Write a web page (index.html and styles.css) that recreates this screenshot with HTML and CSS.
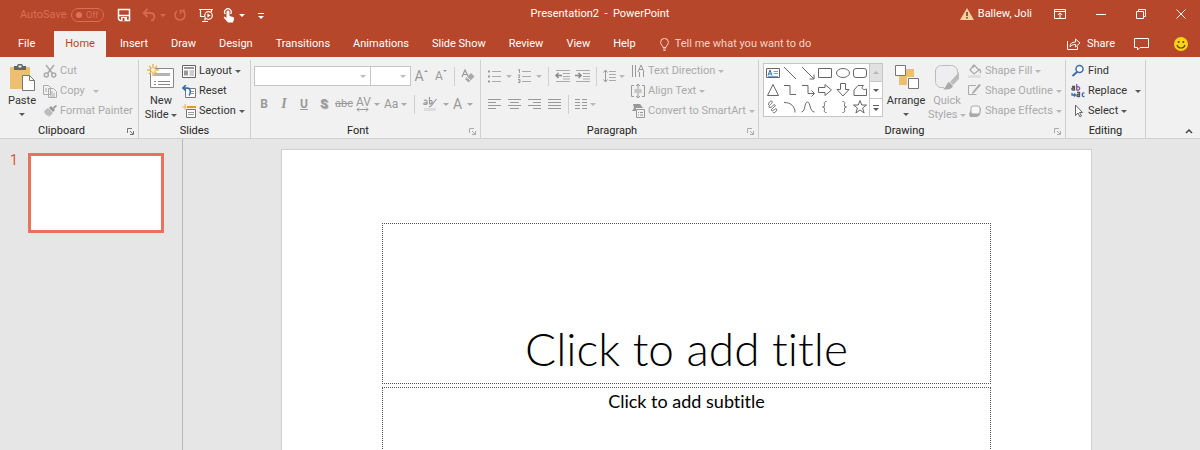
FILE: index.html
```
<!DOCTYPE html>
<html lang="en">
<head>
    <meta charset="UTF-8">
    <meta name="viewport" content="width=device-width, initial-scale=1.0">
    <title>Presentation2 - PowerPoint</title>
    <link rel="stylesheet" href="styles.css">
</head>
<body>
    <header class="titlebar">
        <div class="quick-access">
            <label class="autosave">AutoSave
                <input type="checkbox" class="autosave-input">
                <span class="switch"><i class="knob"></i>Off</span>
            </label>
            <button class="qa-button save" aria-label="Save">
                <svg width="14" height="14" viewBox="0 0 14 14"><path d="M1.500 1.500h11v11h-9.500l-1.500-1.500z" fill="none" stroke="#fff" stroke-width="1.500"/><path d="M2 7.500h10" fill="none" stroke="#fff" stroke-width="1.500"/><path d="M4 9h6v4H4z" fill="#fff"/><path d="M5.500 10h2v3h-2z" fill="#b7472a"/></svg>
            </button>
            <button class="qa-button undo faded" aria-label="Undo">
                <svg width="14" height="14" viewBox="0 0 14 14"><path d="M5.500 1L1.500 5l4 4M2 5h6.500c5 0 5 7 .5 7.500" fill="none" stroke="currentColor" stroke-width="1.800"/></svg>
                <i class="caret"></i>
            </button>
            <button class="qa-button redo faded" aria-label="Repeat">
                <svg width="14" height="14" viewBox="0 0 14 14"><path d="M4 3a5 5 0 1 0 6 0M7.500 6V2.500H12" fill="none" stroke="currentColor" stroke-width="1.600"/></svg>
            </button>
            <button class="qa-button show" aria-label="Start from beginning">
                <svg width="16" height="15" viewBox="0 0 16 15"><g fill="none" stroke="#fff" stroke-width="1.200"><path d="M1 1.500h14M2.500 2v6.500H6M13.500 2v2M7 10v2.500M4 13.500h6"/><circle cx="10.500" cy="7.500" r="3.800"/></g><path d="M9.400 5.500l3.200 2-3.200 2z" fill="#fff"/></svg>
            </button>
            <button class="qa-button touch" aria-label="Touch/Mouse Mode">
                <svg width="12" height="15" viewBox="0 0 12 15"><path d="M2.200 6a3.300 3.300 0 1 1 5.400 0" fill="none" stroke="#fff" stroke-width="1.300"/><path d="M3.500 4c0-2 3-2 3 0v4l3.500 1c1 .4 1.300 1 1.100 2L10 14.500H5L1 10c-.8-1 .5-1.800 1.200-1l1.300 1z" fill="#fff"/></svg>
                <i class="caret"></i>
            </button>
            <button class="qa-button customize" aria-label="Customize Quick Access Toolbar"><i class="caret overline"></i></button>
        </div>
        <div class="document-name">Presentation2 &nbsp;-&nbsp; PowerPoint</div>
        <div class="window-tools">
            <a href="#account" class="account">
                <svg width="14" height="12" viewBox="0 0 14 12"><path d="M7 0l7 12H0z" fill="#f8cf9c"/><path d="M7 4v4M7 9v1.500" stroke="#5b4a22" stroke-width="1.600"/></svg>
                Ballew, Joli
            </a>
            <button aria-label="Ribbon Display Options"><svg width="12" height="10" viewBox="0 0 12 10"><path d="M.5.500h11v9H.5zM.5 2.500h11M6 9V4M3.800 6L6 3.800 8.200 6" fill="none" stroke="#fff"/></svg></button>
            <button aria-label="Minimize"><svg width="10" height="10" viewBox="0 0 10 10"><path d="M0 5.500h10" stroke="#fff"/></svg></button>
            <button aria-label="Restore"><svg width="10" height="10" viewBox="0 0 10 10"><path d="M.5 2.500h7v7h-7zM2.500 2.500v-2h7v7h-2" fill="none" stroke="#fff"/></svg></button>
            <button aria-label="Close"><svg width="10" height="10" viewBox="0 0 10 10"><path d="M.5.500l9 9M9.500.500l-9 9" stroke="#fff"/></svg></button>
        </div>
    </header>

    <nav class="tabs">
        <a href="#file" class="tab file">File</a>
        <a href="#home" class="tab active">Home</a>
        <a href="#insert" class="tab">Insert</a>
        <a href="#draw" class="tab">Draw</a>
        <a href="#design" class="tab">Design</a>
        <a href="#transitions" class="tab">Transitions</a>
        <a href="#animations" class="tab">Animations</a>
        <a href="#slideshow" class="tab">Slide Show</a>
        <a href="#review" class="tab">Review</a>
        <a href="#view" class="tab">View</a>
        <a href="#help" class="tab">Help</a>
        <label class="tell-me">
            <svg width="9" height="13" viewBox="0 0 9 13"><path d="M3 9.500C3 7.500.6 7 .6 4.300a3.900 3.900 0 0 1 7.800 0C8.400 7 6 7.500 6 9.500zM3 11h3M3.500 12.500h2" fill="none" stroke="#f3d3c8"/></svg>
            <input type="text" placeholder="Tell me what you want to do" aria-label="Tell me what you want to do">
        </label>
        <div class="tab-tools">
            <button class="share">
                <svg width="14" height="12" viewBox="0 0 14 12"><path d="M.5 3v8.500h10V8.500M3 9c0-3.500 2-5 5.500-5V1L13 5 8.500 9V6.500C6 6.500 4.500 7 3 9z" fill="none" stroke="#fff"/></svg>
                Share
            </button>
            <button aria-label="Comments"><svg width="15" height="13" viewBox="0 0 15 13"><path d="M.5.500h14v9H6L3.500 12V9.500h-3z" fill="none" stroke="#fff"/></svg></button>
            <button aria-label="Feedback"><svg width="14" height="14" viewBox="0 0 14 14"><circle cx="7" cy="7" r="7" fill="#fcd116"/><path d="M3 8c1 4 7 4 8 0" fill="none" stroke="#5c4a00" stroke-width="1.200"/><circle cx="4.700" cy="5" r="1" fill="#5c4a00"/><circle cx="9.300" cy="5" r="1" fill="#5c4a00"/></svg></button>
        </div>
    </nav>

    <section class="ribbon">
        <div class="group clipboard">
            <div class="group-body">
                <button class="big">
                    <svg width="26" height="27" viewBox="0 0 26 27"><path d="M1 3h20v22H1z" fill="#edc071"/><path d="M5 2h3c0-3 6-3 6 0h3v4H5z" fill="#666"/><path d="M9.500 1.500h3v2h-3z" fill="#f1f1f1"/><path d="M13.500 11.500h7l5 5v10h-12z" fill="#fff" stroke="#777"/><path d="M20.500 11.500v5h5" fill="none" stroke="#777"/></svg>
                    <span>Paste</span>
                    <i class="caret"></i>
                </button>
                <div class="stack">
                    <button class="small" disabled>
                        <svg width="14" height="14" viewBox="0 0 14 14"><g fill="none" stroke="#aaa" stroke-width="1.500"><path d="M3 1l6.500 8.500M11 1L4.500 9.500"/><circle cx="3.300" cy="11" r="2"/><circle cx="10.700" cy="11" r="2"/></g></svg>
                        Cut
                    </button>
                    <button class="small" disabled>
                        <svg width="14" height="14" viewBox="0 0 14 14"><g fill="#f1f1f1" stroke="#aaa"><path d="M.5 1.500h5l2 2v7h-7zM5.500 4.500h5l3 3v6h-8z"/><path d="M2 5h2M2 7h2M7 8h3M7 10h5M7 12h5"/></g></svg>
                        Copy <i class="caret apart"></i>
                    </button>
                    <button class="small" disabled>
                        <svg width="14" height="14" viewBox="0 0 14 14"><path d="M1 7l4-3 5 5-4 4-1-2-1 1-1-2-1 0z" fill="#bbb"/><path d="M6 4l2-2 4 4-2 2zM10 3l3-2 1 1-3 3z" fill="#999"/></svg>
                        Format Painter
                    </button>
                </div>
            </div>
            <div class="group-foot">
                <span>Clipboard</span>
                <button class="launcher" aria-label="Clipboard settings"><svg width="7" height="7" viewBox="0 0 7 7"><path d="M.5 5V.500H5M3 3l3 3M6.500 3v3.500H3" fill="none" stroke="currentColor"/></svg></button>
            </div>
        </div>

        <div class="group slides">
            <div class="group-body">
                <button class="big">
                    <svg width="28" height="27" viewBox="0 0 28 27"><path d="M3.500 4.500h23v19h-23z" fill="#fff" stroke="#888"/><path d="M7 9h16v3H7z" fill="#b4b4b4"/><path d="M7 17.500h2M11 17.500h12M7 20.500h2M11 20.500h12" stroke="#888"/><path d="M6 0v12M0 6h12M2 2l8 8M10 2l-8 8" stroke="#eab65c" stroke-width="1.500"/><circle cx="6" cy="6" r="2" fill="#fff3d6"/></svg>
                    <span>New</span>
                    <span>Slide <i class="caret"></i></span>
                </button>
                <div class="stack">
                    <button class="small">
                        <svg width="14" height="13" viewBox="0 0 14 13"><path d="M.5.500h13v12H.5z" fill="#fff" stroke="#666"/><path d="M2 2h10v2H2zM2 5.500h4v5H2z" fill="#999"/><path d="M7.500 6h4.500M7.500 8h4.500M7.500 10h4.500" stroke="#999"/></svg>
                        Layout <i class="caret"></i>
                    </button>
                    <button class="small">
                        <svg width="14" height="13" viewBox="0 0 14 13"><path d="M3.500 3.500h10v9h-10z" fill="#fff" stroke="#777"/><path d="M9 6.500h3M9 8.500h3" stroke="#999"/><path d="M4 0L.8 3 4 6M1.500 3H5c4 0 4 5 2 7.500" fill="none" stroke="#2f6eab" stroke-width="1.500"/></svg>
                        Reset
                    </button>
                    <button class="small">
                        <svg width="14" height="14" viewBox="0 0 14 14"><path d="M5 2h9v2H5z" fill="#e29a2e"/><path d="M3 0v6M0 3h6" stroke="#eab65c"/><path d="M4.500 5.500h9v8h-9z" fill="#fff" stroke="#777"/><path d="M6 8.500h6M6 10.500h6" stroke="#999"/></svg>
                        Section <i class="caret"></i>
                    </button>
                </div>
            </div>
            <div class="group-foot"><span>Slides</span></div>
        </div>

        <div class="group font">
            <div class="group-body rows">
                <div class="row fields">
                    <span class="combo family"><select aria-label="Font" disabled><option></option></select><i class="caret"></i></span>
                    <span class="combo size"><select aria-label="Font size" disabled><option></option></select><i class="caret"></i></span>
                    <button class="tool" disabled aria-label="Increase font size"><span class="grow">A</span><i class="mark up"></i></button>
                    <button class="tool" disabled aria-label="Decrease font size"><span>A</span><i class="mark"></i></button>
                    <i class="sep"></i>
                    <button class="tool eraser" disabled aria-label="Clear formatting"><svg width="14" height="14" viewBox="0 0 14 14"><path d="M1 8L4 1l3 6M2 5.500h4" fill="none" stroke="#999" stroke-width="1.200"/><path d="M4 10l6-6 3.500 3.500-6 6z" fill="#aaa"/><path d="M6 8l3.500 3.500" stroke="#f1f1f1"/></svg></button>
                </div>
                <div class="row format">
                    <button class="tool bold" disabled>B</button>
                    <button class="tool italic" disabled>I</button>
                    <button class="tool underline" disabled>U</button>
                    <button class="tool shadow" disabled>S</button>
                    <button class="tool strike" disabled>abc</button>
                    <button class="tool wide spacing" disabled><span>AV<svg width="13" height="5" viewBox="0 0 13 5"><path d="M1 2.500h11M3 .5L1 2.500l2 2M10 .5l2 2-2 2" fill="none" stroke="#999"/></svg></span><i class="caret"></i></button>
                    <button class="tool wide case" disabled>Aa <i class="caret"></i></button>
                    <i class="sep"></i>
                    <button class="tool wide" disabled aria-label="Text highlight color"><svg width="15" height="15" viewBox="0 0 15 15"><g fill="none" stroke="#999" stroke-width="1.200"><path d="M1 3.500c2-1 3 0 3 1v3M4 5.500c-4 0-4 2-2 2 1 0 2-1 2-1M6.500 0v7.500M6.500 4c3-2 4 3 0 3M13.500 2L8 9l-2 1"/></g><path d="M1 11h12v3H1z" fill="#dedce2"/></svg><i class="caret"></i></button>
                    <button class="tool wide color" disabled>A <i class="caret"></i></button>
                </div>
            </div>
            <div class="group-foot">
                <span>Font</span>
                <button class="launcher" disabled aria-label="Font settings"><svg width="7" height="7" viewBox="0 0 7 7"><path d="M.5 5V.500H5M3 3l3 3M6.500 3v3.500H3" fill="none" stroke="currentColor"/></svg></button>
            </div>
        </div>

        <div class="group paragraph">
            <div class="group-body">
                <div class="rows">
                    <div class="row">
                        <button class="tool wide" disabled aria-label="Bullets"><svg width="13" height="13" viewBox="0 0 13 13"><path d="M4 1.500h9M4 6.500h9M4 11.500h9" stroke="#aaa"/><path d="M0 1.500h2M0 6.500h2M0 11.500h2" stroke="#999" stroke-width="2"/></svg><i class="caret"></i></button>
                        <button class="tool wide" disabled aria-label="Numbering"><svg width="13" height="14" viewBox="0 0 13 14"><path d="M4 2.500h9M4 7.500h9M4 12.500h9" stroke="#aaa"/><path d="M0 1l1.500-.5V4M0 6h2L.5 8.500H2M0 10.500h2v3H0M.5 12H2" fill="none" stroke="#999"/></svg><i class="caret"></i></button>
                        <i class="sep"></i>
                        <button class="tool" disabled aria-label="Decrease indent"><svg width="15" height="12" viewBox="0 0 15 12"><path d="M1 .5h14M8 3.500h7M8 6.500h7M1 11.500h14M8 9h7" stroke="#aaa"/><path d="M7 5.500H1M3.500 3L1 5.500 3.500 8" fill="none" stroke="#888" stroke-width="1.500"/></svg></button>
                        <button class="tool" disabled aria-label="Increase indent"><svg width="15" height="12" viewBox="0 0 15 12"><path d="M1 .5h14M8 3.500h7M8 6.500h7M1 11.500h14M8 9h7" stroke="#aaa"/><path d="M0 5.500h6M3.500 3L6 5.500 3.500 8" fill="none" stroke="#888" stroke-width="1.500"/></svg></button>
                        <i class="sep"></i>
                        <button class="tool wide tight" disabled aria-label="Line spacing"><svg width="13" height="14" viewBox="0 0 13 14"><path d="M6 2.500h7M6 5.500h7M6 8.500h7M6 11.500h7" stroke="#aaa"/><path d="M2.500 1v12M.5 3.500l2-2.500 2 2.500M.5 10.500l2 2.500 2-2.500" fill="none" stroke="#999"/></svg><i class="caret"></i></button>
                    </div>
                    <div class="row">
                        <button class="tool" disabled aria-label="Align left"><svg width="13" height="10" viewBox="0 0 13 10"><path d="M0 .5h13M0 3.500h8M0 6.500h13M0 9.500h8" stroke="#999"/></svg></button>
                        <button class="tool" disabled aria-label="Center"><svg width="13" height="10" viewBox="0 0 13 10"><path d="M0 .5h13M2 3.500h9M0 6.500h13M2 9.500h9" stroke="#999"/></svg></button>
                        <button class="tool" disabled aria-label="Align right"><svg width="13" height="10" viewBox="0 0 13 10"><path d="M0 .5h13M5 3.500h8M0 6.500h13M5 9.500h8" stroke="#999"/></svg></button>
                        <button class="tool" disabled aria-label="Justify"><svg width="13" height="10" viewBox="0 0 13 10"><path d="M0 .5h13M0 3.500h13M0 6.500h13M0 9.500h13" stroke="#999"/></svg></button>
                        <i class="sep"></i>
                        <button class="tool wide tight" disabled aria-label="Columns"><svg width="12" height="10" viewBox="0 0 12 10"><path d="M0 .5h5M7 .5h5M0 3.500h5M7 3.500h5M0 6.500h5M7 6.500h5M0 9.500h5M7 9.500h5" stroke="#999"/></svg><i class="caret"></i></button>
                    </div>
                </div>
                <div class="stack">
                    <button class="small" disabled>
                        <svg width="14" height="14" viewBox="0 0 14 14"><path d="M1.500 1v12M4.500 1v12M8.500 8v5M12.500 8v5M7 8l3-7 3 7M8 5.500h4" fill="none" stroke="#999"/></svg>
                        Text Direction <i class="caret"></i>
                    </button>
                    <button class="small" disabled>
                        <svg width="14" height="14" viewBox="0 0 14 14"><path d="M3 1.500H.5v11H3M11 1.500h2.500v11H11M7 0v5M7 9v5M5 2l2-2 2 2M5 12l2 2 2-2M3.500 6h7M3.500 8h7" fill="none" stroke="#999"/></svg>
                        Align Text <i class="caret"></i>
                    </button>
                    <button class="small" disabled>
                        <svg width="14" height="14" viewBox="0 0 14 14"><path d="M2 0h7l3 4H5v3H1l2-3z" fill="#999"/><path d="M5.500 5.500h8v8h-8z" fill="#f1f1f1" stroke="#999"/><path d="M7 8.500h1M9 8.500h3M7 11h1M9 11h3" stroke="#999"/></svg>
                        Convert to SmartArt <i class="caret"></i>
                    </button>
                </div>
            </div>
            <div class="group-foot">
                <span>Paragraph</span>
                <button class="launcher" disabled aria-label="Paragraph settings"><svg width="7" height="7" viewBox="0 0 7 7"><path d="M.5 5V.500H5M3 3l3 3M6.500 3v3.500H3" fill="none" stroke="currentColor"/></svg></button>
            </div>
        </div>

        <div class="group drawing">
            <div class="group-body">
                <div class="gallery">
                    <div class="shapes">
                        <button aria-label="Text box"><svg viewBox="0 0 16 16"><path d="M1.500 3.500h13v9h-13z"/><path d="M3 10.500L5 5l2 5.500M4 9h2" stroke="#2f6eab"/><path d="M8.500 6.500H13M8.500 8.500H13M3 11.500h10" stroke="#7aa3cc"/></svg></button>
                        <button aria-label="Line"><svg viewBox="0 0 16 16"><path d="M2 2l12 12"/></svg></button>
                        <button aria-label="Arrow"><svg viewBox="0 0 16 16"><path d="M2 2l12 12M14 9.500V14H9.500"/></svg></button>
                        <button aria-label="Rectangle"><svg viewBox="0 0 16 16"><path d="M1.500 3.500h13v9h-13z"/></svg></button>
                        <button aria-label="Oval"><svg viewBox="0 0 16 16"><ellipse cx="8" cy="8" rx="6.500" ry="4.500"/></svg></button>
                        <button aria-label="Rounded rectangle"><svg viewBox="0 0 16 16"><rect x="1.500" y="3.500" width="13" height="9" rx="2.500"/></svg></button>
                        <button aria-label="Triangle"><svg viewBox="0 0 16 16"><path d="M8 2.500l5.500 11h-11z"/></svg></button>
                        <button aria-label="Elbow connector"><svg viewBox="0 0 16 16"><path d="M2 3.500h6v9h6"/></svg></button>
                        <button aria-label="Elbow arrow connector"><svg viewBox="0 0 16 16"><path d="M2 3.500h6v8h6M11.500 8.500l3 3-3 3"/></svg></button>
                        <button aria-label="Right arrow"><svg viewBox="0 0 16 16"><path d="M1.500 5.500H8v-3L14.500 8 8 13.500v-3H1.500z"/></svg></button>
                        <button aria-label="Down arrow"><svg viewBox="0 0 16 16"><path d="M5.500 1.500v6h-3.500l6 6.500 6-6.500h-3.500v-6z"/></svg></button>
                        <button aria-label="Freeform"><svg viewBox="0 0 16 16"><path d="M6 3.500h5.500c-3 3-.5 5 3 3.500v6.500H2V8z"/></svg></button>
                        <button aria-label="Scribble"><svg viewBox="0 0 16 16"><path d="M3.500 6c0-5 6-5 3-1.500-2 2-4 4-1.500 4s3.500-4 5-2.500-5 4-3.500 5.500 4-3 5-1.500-2 4.500-3.500 3.500"/></svg></button>
                        <button aria-label="Arc"><svg viewBox="0 0 16 16"><path d="M2 3.500c7 0 11 4 11 10"/></svg></button>
                        <button aria-label="Curve"><svg viewBox="0 0 16 16"><path d="M1.500 13C6 12 4 3 7.500 3c3 0 2 10 7 10"/></svg></button>
                        <button aria-label="Left brace"><svg viewBox="0 0 16 16"><path d="M9.500 2.500c-3 0-2 2-2 3.500s-.5 2-2 2c1.500 0 2 .5 2 2s-1 3.500 2 3.500"/></svg></button>
                        <button aria-label="Right brace"><svg viewBox="0 0 16 16"><path d="M7.500 2.500c3 0 2 2 2 3.500s.5 2 2 2c-1.500 0-2 .5-2 2s1 3.500-2 3.500"/></svg></button>
                        <button aria-label="Star"><svg viewBox="0 0 16 16"><path d="M8 1.500l1.700 4.500h4.800l-3.900 3 1.500 5L8 11l-4.100 3 1.500-5-3.900-3h4.800z"/></svg></button>
                    </div>
                    <div class="scroller">
                        <button disabled aria-label="Scroll up"><i class="caret up"></i></button>
                        <button aria-label="Scroll down"><i class="caret"></i></button>
                        <button aria-label="More shapes"><i class="caret overline"></i></button>
                    </div>
                </div>
                <button class="big arrange">
                    <svg width="26" height="27" viewBox="0 0 26 27"><path d="M12 5h9v8h-9zM6 12h8v9H6z" fill="#edc071"/><path d="M2.500 1.500h10v10h-10zM15.500 14.500h10v10h-10z" fill="#fff" stroke="#777"/></svg>
                    <span>Arrange</span>
                    <i class="caret"></i>
                </button>
                <button class="big" disabled>
                    <svg width="26" height="27" viewBox="0 0 26 27"><path d="M10 23.500H7c-3 0-5.500-3-5.500-6V7c0-3 3-5.500 6-5.500h10c3 0 6 2.500 6 5.500v2" fill="#eeeef1" stroke="#bbb"/><path d="M25 8v7l-6 6-3-3z" fill="#bbb"/><path d="M15 18l4 4c-2 4-6 4-10 3 3-1 3-5 6-7z" fill="#aaa"/></svg>
                    <span>Quick</span>
                    <span>Styles <i class="caret"></i></span>
                </button>
                <div class="stack">
                    <button class="small" disabled>
                        <svg width="14" height="14" viewBox="0 0 14 14"><path d="M6 1l5 5-5 4-4-4zM5 4V1M11 5c2 1 2 3 1 4" fill="none" stroke="#aaa" stroke-width="1.300"/><path d="M0 11h13v3H0z" fill="#e2dfe1"/></svg>
                        Shape Fill <i class="caret"></i>
                    </button>
                    <button class="small" disabled>
                        <svg width="14" height="14" viewBox="0 0 14 14"><path d="M8 1.500H.5v9h8" fill="none" stroke="#aaa"/><path d="M13 1L6 9l-2 1 .5-2L11 0z" fill="#aaa"/></svg>
                        Shape Outline <i class="caret"></i>
                    </button>
                    <button class="small" disabled>
                        <svg width="14" height="14" viewBox="0 0 14 14"><path d="M4 4h9l-1 7-3 2H2l-1-3z" fill="#aaa"/><rect x="3" y="2" width="9" height="8" rx="2" fill="#f7f7f7" stroke="#aaa"/></svg>
                        Shape Effects <i class="caret"></i>
                    </button>
                </div>
            </div>
            <div class="group-foot">
                <span>Drawing</span>
                <button class="launcher" disabled aria-label="Drawing settings"><svg width="7" height="7" viewBox="0 0 7 7"><path d="M.5 5V.500H5M3 3l3 3M6.500 3v3.500H3" fill="none" stroke="currentColor"/></svg></button>
            </div>
        </div>

        <div class="group editing">
            <div class="group-body">
                <div class="stack">
                    <button class="small">
                        <svg width="14" height="14" viewBox="0 0 14 14"><circle cx="8.500" cy="5" r="3.500" fill="#fff" stroke="#3a6ea8" stroke-width="1.500"/><path d="M6 8l-4.500 4" stroke="#3a6ea8" stroke-width="2"/></svg>
                        Find
                    </button>
                    <button class="small">
                        <svg width="14" height="14" viewBox="0 0 14 14"><g fill="none" stroke-width="1.300"><path d="M1 2.500h2.500v4M3.500 4H2C.5 4 .5 6 2 6h1.500" stroke="#555"/><path d="M5.700 0v6.500M5.700 3c4-1.500 4 4 0 3" stroke="#8a4fa3"/><path d="M1 9v2h3M3 9.500L4.500 11 3 12.500" stroke="#2f6eab"/><path d="M6 8.500h2.500v4.500M8.500 10.500H7c-1.500 0-1.500 2 0 2h1.500" stroke="#555"/><path d="M13.500 9c-3-1-3 4.500 0 3.500" stroke="#2f6eab"/></g></svg>
                        Replace <i class="caret apart"></i>
                    </button>
                    <button class="small">
                        <svg width="14" height="14" viewBox="0 0 14 14"><path d="M4.500 1v10.500L7 9l2 4 1.500-1-2-3.500h3z" fill="#fff" stroke="#666"/></svg>
                        Select <i class="caret"></i>
                    </button>
                </div>
            </div>
            <div class="group-foot"><span>Editing</span></div>
        </div>
        <button class="collapse" aria-label="Collapse the Ribbon"><svg width="8" height="6" viewBox="0 0 8 6"><path d="M1 5l3-3 3 3" fill="none" stroke="#444" stroke-width="1.500"/></svg></button>
    </section>

    <main class="workspace">
        <aside class="thumbnails">
            <span class="number">1</span>
            <a href="#slide-1" class="thumbnail" aria-label="Slide 1"></a>
        </aside>
        <div class="canvas">
            <div class="slide" id="slide-1">
                <div class="placeholder title"><h1>Click to add title</h1></div>
                <div class="placeholder subtitle"><p>Click to add subtitle</p></div>
            </div>
        </div>
    </main>
</body>
</html>
```
FILE: styles.css
```
* {
    box-sizing: border-box;
}
body {
    margin: 0;
    height: 100vh;
    display: flex;
    flex-direction: column;
    overflow: hidden;
    background-color: #e6e6e6;
    color: #333;
    font-family: Roboto, "Open Sans", sans-serif;
    font-size: 11px;
    line-height: 14px;
}
button, input, select {
    font: inherit;
    color: inherit;
    background: none;
    border: none;
    padding: 0;
    margin: 0;
}
a {
    color: inherit;
    text-decoration: none;
}
svg {
    display: block;
    flex: none;
}
.caret {
    flex: none;
    display: inline-block;
    border: 3px solid transparent;
    border-top-color: currentColor;
    border-bottom: 0;
    vertical-align: middle;
}
.caret.up {
    transform: rotate(180deg);
}
.caret.overline {
    position: relative;
    top: 2px;
}
.caret.overline::before {
    content: "";
    position: absolute;
    left: -3px;
    top: -6px;
    width: 6px;
    height: 1px;
    background-color: currentColor;
}

/* title bar */
.titlebar {
    flex: none;
    height: 31px;
    display: grid;
    grid-template-columns: 1fr auto 1fr;
    align-items: center;
    padding-bottom: 3px;
    background-color: #b7472a;
    color: #fff;
}
.quick-access {
    display: flex;
    align-items: center;
    padding: 2px 0 0 20px;
}
.autosave {
    display: flex;
    align-items: center;
    gap: 5px;
    color: #dc6d54;
}
.autosave-input {
    position: absolute;
    opacity: 0;
}
.switch {
    display: flex;
    align-items: center;
    justify-content: space-between;
    width: 33px;
    height: 14px;
    padding: 0 5px 0 4px;
    border: 1px solid #dc6d54;
    border-radius: 7px;
    font-size: 9px;
}
.knob {
    width: 6px;
    height: 6px;
    border-radius: 50%;
    background-color: #e0705a;
}
.qa-button {
    display: flex;
    align-items: center;
    gap: 4px;
}
.faded {
    color: #d5694d;
}
.save {
    margin-left: 13px;
}
.undo {
    margin-left: 11px;
}
.redo {
    margin-left: 7px;
}
.show {
    margin-left: 11px;
}
.touch {
    margin-left: 9px;
}
.customize {
    margin-left: 13px;
}
.window-tools {
    display: flex;
    align-items: center;
    justify-content: flex-end;
    gap: 30px;
    padding-right: 14px;
}
.account {
    display: flex;
    align-items: center;
    gap: 4px;
    margin-right: -8px;
}

/* tabs */
.tabs {
    flex: none;
    height: 26px;
    display: flex;
    gap: 1px;
    background-color: #b7472a;
    color: #fff;
}
.tab {
    padding: 6px 11px;
}
.tab.file {
    margin: 0 7px;
}
.tab.active {
    margin-right: 2px;
    background-color: #f1f1f1;
    color: #b7472a;
}
.tell-me {
    display: flex;
    align-items: center;
    gap: 6px;
    margin-left: 12px;
}
.tell-me input {
    width: 160px;
}
.tell-me input::placeholder {
    color: #f3d3c8;
    opacity: 1;
}
.tab-tools {
    display: flex;
    align-items: center;
    gap: 25px;
    margin-left: auto;
    padding-right: 12px;
}
.share {
    display: flex;
    align-items: center;
    gap: 6px;
    margin-right: -6px;
}

/* ribbon */
.ribbon {
    flex: none;
    height: 82px;
    display: flex;
    background-color: #f1f1f1;
    border-bottom: 1px solid #d0d0d0;
}
.group {
    flex: none;
    display: flex;
    flex-direction: column;
    margin: 3px 0 0;
    border-right: 1px solid #d0d0d0;
}
.clipboard {
    width: 139px;
}
.slides {
    width: 112px;
}
.font {
    width: 230px;
}
.paragraph {
    width: 278px;
}
.drawing {
    width: 307px;
}
.editing {
    width: 80px;
}
.group-body {
    height: 65px;
    display: flex;
}
.group-foot {
    display: flex;
    align-items: center;
}
.group-foot span {
    flex: 1;
    text-align: center;
    color: #222;
}
.launcher {
    width: 15px;
    display: flex;
    justify-content: flex-end;
    padding-right: 4px;
    color: #777;
}
.launcher:disabled {
    color: #aaa;
}
.stack {
    display: flex;
    flex-direction: column;
    padding-top: 1px;
}
.small {
    height: 20px;
    display: flex;
    align-items: center;
    gap: 3px;
    white-space: nowrap;
}
.small:disabled, .big:disabled, .tool:disabled {
    color: #aaa;
}
.big {
    width: 36px;
    display: flex;
    flex-direction: column;
    align-items: center;
    padding-top: 4px;
}
.big svg {
    margin-bottom: 3px;
}
.big span {
    white-space: nowrap;
}
.big > .caret {
    margin-top: 5px;
}
.group .caret {
    opacity: 0.8;
}
.caret.apart {
    margin-left: 5px;
}
.clipboard .group-body {
    padding-left: 4px;
    gap: 3px;
}
.slides .group-body {
    padding-left: 4px;
    gap: 3px;
}
.rows {
    display: flex;
    flex-direction: column;
    padding-top: 2px;
}
.row {
    height: 28px;
    display: flex;
    align-items: center;
}
.sep {
    width: 1px;
    height: 19px;
    margin: 0 4px;
    background-color: #d0d0d0;
}
.tool {
    width: 20px;
    height: 20px;
    display: flex;
    align-items: center;
    justify-content: center;
}
.tool.wide {
    width: 30px;
    justify-content: flex-start;
    gap: 5px;
    padding-left: 4px;
}
.tool.tight {
    padding-left: 2px;
    gap: 3px;
}
.font .row {
    padding-left: 3px;
}
.combo {
    position: relative;
    display: flex;
    height: 20px;
    background-color: #fff;
    border: 1px solid #c6c6c6;
}
.combo select {
    appearance: none;
    width: 100%;
}
.combo .caret {
    position: absolute;
    right: 4px;
    top: 8px;
    color: #aaa;
}
.family {
    width: 117px;
}
.size {
    width: 40px;
    border-left: 0;
}
.mark {
    align-self: flex-start;
    margin-top: 4px;
    border: 2px solid transparent;
    border-top-color: #999;
    border-bottom: 0;
}
.mark.up {
    transform: rotate(180deg);
}
.fields .tool {
    font-size: 12px;
    color: #999;
}
.fields .grow {
    font-size: 14px;
}
.fields .sep {
    margin: 0 3px;
}
.format .tool {
    color: #999;
    font-size: 12px;
}
.bold, .underline, .shadow {
    font-weight: bold;
}
.format .italic {
    font-family: "Liberation Serif", serif;
    font-style: italic;
    font-weight: bold;
    font-size: 14px;
}
.underline {
    text-decoration: underline;
}
.shadow {
    text-shadow: 1px 1px 1px #999;
}
.format .strike {
    font-size: 11px;
    text-decoration: line-through;
}
.spacing {
    line-height: 10px;
}
.format .spacing, .format .case {
    width: 28px;
    padding-left: 2px;
    gap: 3px;
}
.format .color {
    font-size: 14px;
}
.paragraph .rows {
    width: 150px;
    padding-left: 3px;
}
.drawing .group-body {
    padding-left: 4px;
}
.gallery {
    display: flex;
    height: 54px;
    width: 120px;
    margin-top: 3px;
    background-color: #fff;
    border: 1px solid #c6c6c6;
}
.shapes {
    flex: 1;
    display: grid;
    grid-template-columns: repeat(6, 1fr);
    align-items: center;
    justify-items: center;
}
.shapes svg {
    width: 16px;
    height: 16px;
    fill: none;
    stroke: #666;
}
.scroller {
    width: 13px;
    display: flex;
    flex-direction: column;
    border-left: 1px solid #c6c6c6;
}
.scroller button {
    flex: 1;
    display: flex;
    align-items: center;
    justify-content: center;
}
.scroller button + button {
    border-top: 1px solid #c6c6c6;
}
.scroller button:disabled {
    background-color: #e1e1e1;
    color: #aaa;
}
.arrange {
    width: 46px;
}
.drawing .stack {
    margin-left: 3px;
}
.editing .group-body {
    padding-left: 5px;
}
.collapse {
    margin-left: auto;
    align-self: flex-end;
    padding: 4px 7px;
}

/* workspace */
.workspace {
    flex: 1;
    min-height: 0;
    display: flex;
}
.thumbnails {
    width: 183px;
    display: flex;
    align-items: flex-start;
    gap: 10px;
    padding: 14px 18px 0 10px;
    border-right: 1px solid #b8b8b8;
}
.number {
    color: #d65a3a;
    font-size: 14px;
}
.thumbnail {
    flex: 1;
    aspect-ratio: 17 / 10;
    background-color: #fff;
    border: 3px solid #e8735a;
}
.canvas {
    flex: 1;
    padding: 10px 108px 0 98px;
    overflow: hidden;
}
.slide {
    aspect-ratio: 16 / 9;
    padding: 73px 100px;
    background-color: #fff;
    border: 1px solid #d0d0d0;
    color: #000;
    text-align: center;
    font-family: Lato, sans-serif;
    font-variant-ligatures: none;
}
.placeholder {
    border: 1px dotted #555;
}
.title {
    height: 161px;
    display: flex;
    align-items: flex-end;
    justify-content: center;
    margin-bottom: 3px;
}
.title h1 {
    margin: 0 0 6px;
    font-size: 46px;
    line-height: 56px;
    font-weight: 300;
}
.subtitle {
    height: 110px;
}
.subtitle p {
    margin: 2px 0;
    font-size: 18px;
    line-height: 22px;
}
```
